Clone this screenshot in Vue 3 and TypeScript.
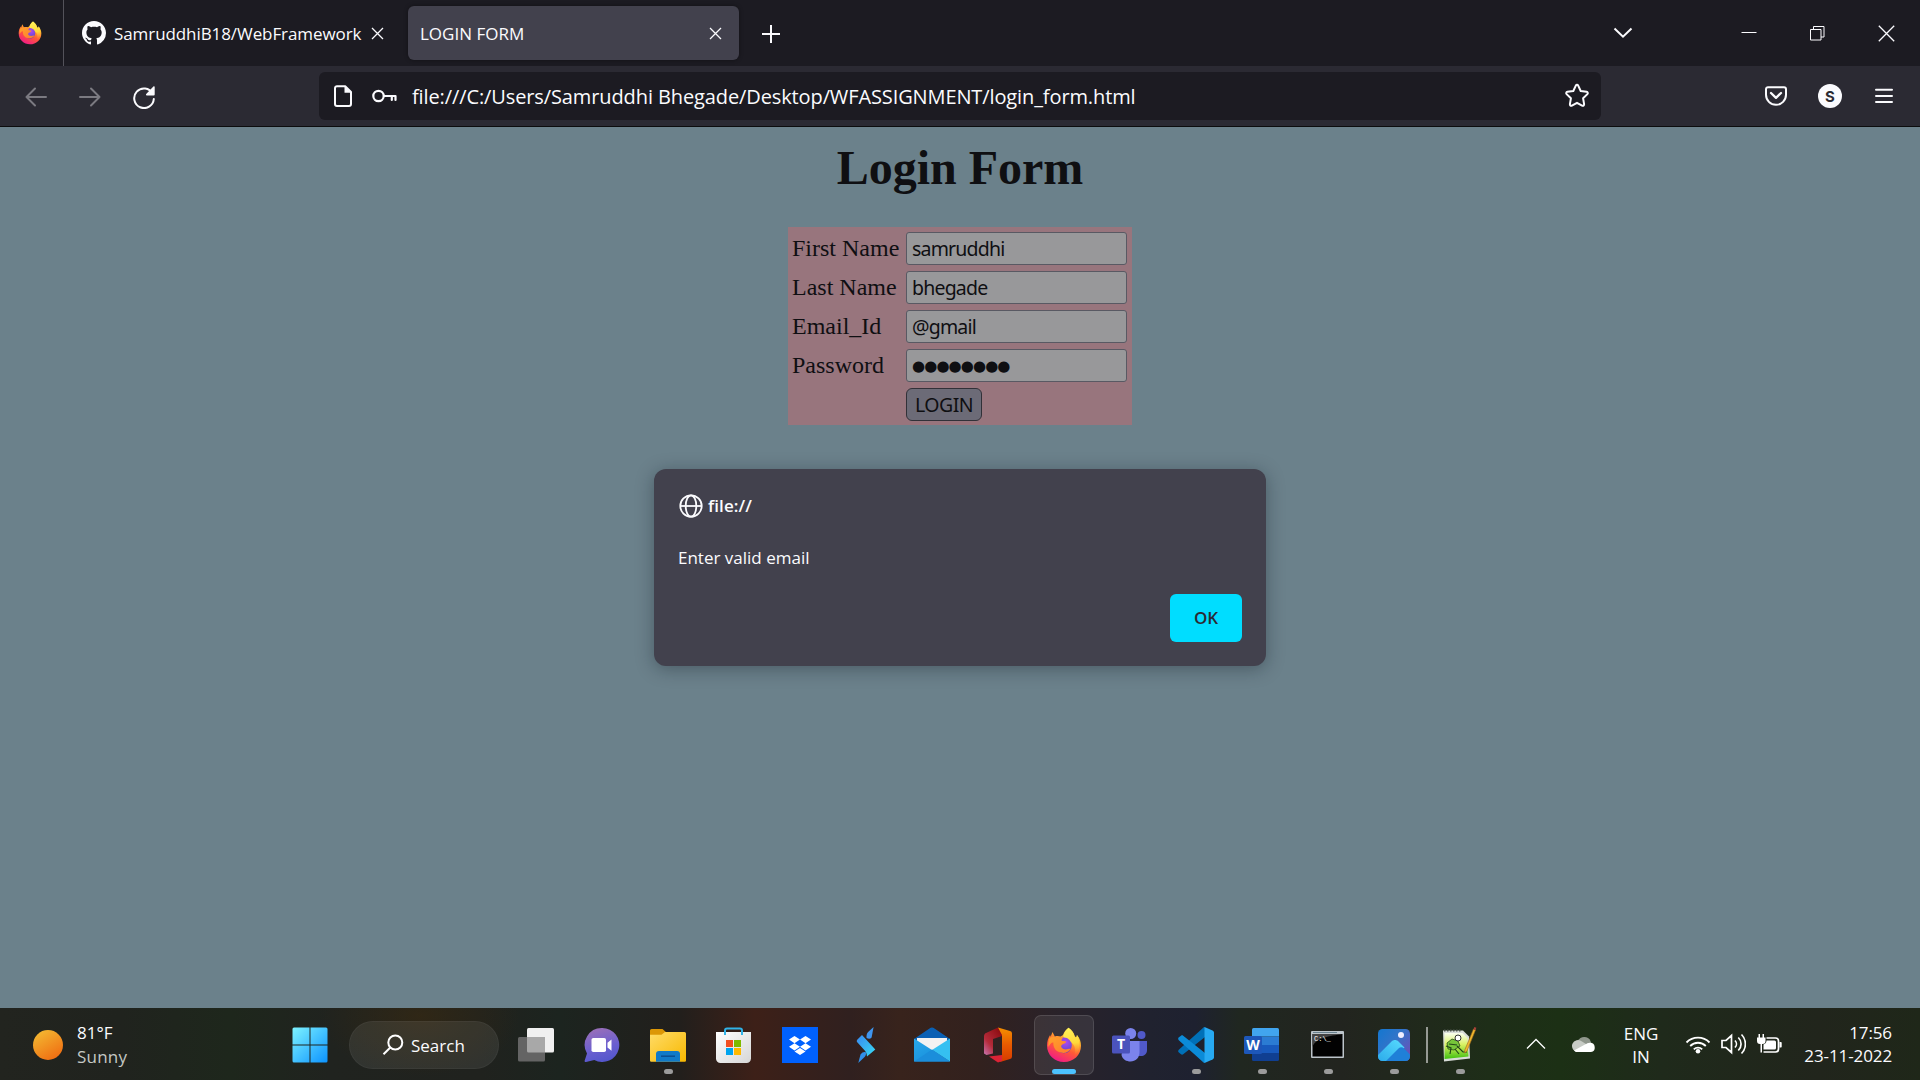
<script setup lang="ts">
interface Field {
  label: string
  value: string
  secret?: boolean
}

const fields: Field[] = [
  { label: 'First Name', value: 'samruddhi' },
  { label: 'Last Name', value: 'bhegade' },
  { label: 'Email_Id', value: '@gmail' },
  { label: 'Password', value: '●●●●●●●●', secret: true },
]

interface TaskApp {
  id: string
  running?: boolean
  active?: boolean
  divided?: boolean
}

const apps: TaskApp[] = [
  { id: 'taskview' },
  { id: 'chat' },
  { id: 'explorer', running: true },
  { id: 'store' },
  { id: 'dropbox' },
  { id: 'stream' },
  { id: 'mail' },
  { id: 'office' },
  { id: 'firefox', active: true },
  { id: 'teams' },
  { id: 'vscode', running: true },
  { id: 'word', running: true },
  { id: 'cmd', running: true },
  { id: 'photos', running: true },
  { id: 'notepad', running: true, divided: true },
]
</script>

<template>
  <div class="screen">
    <svg class="defs" width="0" height="0" aria-hidden="true">
      <defs>
        <linearGradient id="ffBody" x1="0.8" y1="0" x2="0.3" y2="1">
          <stop offset="0" stop-color="#fff44f" /><stop offset="0.3" stop-color="#ffb52e" />
          <stop offset="0.6" stop-color="#ff5a36" /><stop offset="1" stop-color="#f0188a" />
        </linearGradient>
        <linearGradient id="ffFlame" x1="0.5" y1="0" x2="0.6" y2="1">
          <stop offset="0" stop-color="#fff35a" /><stop offset="0.55" stop-color="#ffd93a" /><stop offset="1" stop-color="#ff8a30" stop-opacity="0" />
        </linearGradient>
        <radialGradient id="ffGlobe" cx="0.6" cy="0.3" r="0.8">
          <stop offset="0" stop-color="#b049ee" /><stop offset="0.6" stop-color="#7048d8" /><stop offset="1" stop-color="#4a3bb8" />
        </radialGradient>
        <linearGradient id="ffHead" x1="0" y1="0" x2="1" y2="1">
          <stop offset="0" stop-color="#ffa22b" /><stop offset="1" stop-color="#ff7b2e" />
        </linearGradient>
        <linearGradient id="winG" x1="0" y1="0" x2="1" y2="1">
          <stop offset="0" stop-color="#7df3ff" /><stop offset="1" stop-color="#0c93ff" />
        </linearGradient>
        <linearGradient id="chatG" x1="0.3" y1="0" x2="0.6" y2="1">
          <stop offset="0" stop-color="#9a6fb8" /><stop offset="0.6" stop-color="#6a5fd0" /><stop offset="1" stop-color="#5356cc" />
        </linearGradient>
        <linearGradient id="folderG" x1="0" y1="0" x2="1" y2="1">
          <stop offset="0" stop-color="#ffdc68" /><stop offset="1" stop-color="#f8b800" />
        </linearGradient>
        <linearGradient id="bagG" x1="0" y1="0" x2="1" y2="1">
          <stop offset="0" stop-color="#fff" /><stop offset="1" stop-color="#d6d6d6" />
        </linearGradient>
        <linearGradient id="streamG" x1="0" y1="0" x2="1" y2="1">
          <stop offset="0" stop-color="#3888f0" /><stop offset="1" stop-color="#38dcf4" />
        </linearGradient>
        <linearGradient id="mailG" x1="0" y1="0" x2="1" y2="1">
          <stop offset="0" stop-color="#28a8ea" /><stop offset="1" stop-color="#1488d8" />
        </linearGradient>
        <linearGradient id="offA" x1="0" y1="1" x2="0.8" y2="0">
          <stop offset="0" stop-color="#c875b0" /><stop offset="0.4" stop-color="#b42b3a" /><stop offset="1" stop-color="#8c0c10" />
        </linearGradient>
        <linearGradient id="offB" x1="0" y1="0" x2="0" y2="1">
          <stop offset="0" stop-color="#f59000" /><stop offset="0.5" stop-color="#e85a00" /><stop offset="1" stop-color="#d63a00" />
        </linearGradient>
        <linearGradient id="photoG" x1="0" y1="0" x2="1" y2="0.8">
          <stop offset="0" stop-color="#1377d0" /><stop offset="0.5" stop-color="#3474c8" /><stop offset="1" stop-color="#6b4fb8" />
        </linearGradient>
        <linearGradient id="mountG" x1="1" y1="0" x2="0" y2="1">
          <stop offset="0" stop-color="#58dcff" /><stop offset="1" stop-color="#2cabea" />
        </linearGradient>
        <linearGradient id="sunG" x1="0.2" y1="0" x2="0.8" y2="1">
          <stop offset="0" stop-color="#f3b932" /><stop offset="1" stop-color="#f06a10" />
        </linearGradient>
        <linearGradient id="grassG" x1="0" y1="0" x2="0" y2="1">
          <stop offset="0" stop-color="#fafff0" /><stop offset="0.45" stop-color="#d8f060" /><stop offset="1" stop-color="#40c010" />
        </linearGradient>
        <symbol id="fox" viewBox="0 0 36 36">
          <path fill="url(#ffBody)" d="M22.5 0.7c3.6 2.2 5.3 5 6.4 8.7l2.1 1-.1-2.3C34 11.6 35 15 35 18.7 35 28 27.5 35 18 35S1 28 1 18.5c0-4.1 1.3-7.8 3.1-10.4l.5 1.6L6.5 5l2.3 4.4c2-.6 4-.5 5.8.1l2.4-1.6c1-2.8 2.7-5 5.5-7.2z" />
          <path fill="url(#ffFlame)" d="M22.5.7C27 4.7 28.3 8 29.6 11.6L31 8c4.2 7 3.1 16.8-2.8 21 2.2-6.8.6-10.8-3-13.6-3-2.4-6.6-3-8-6.5 1-3.4 2.5-6 5.3-8.2z" />
          <circle cx="18" cy="18.4" r="7.8" fill="url(#ffGlobe)" />
          <path fill="url(#ffHead)" d="M3 12c1.7-1.900 4.900-3 7.800-1.400 2.300-.9 4.400-.9 6 .1-.4 1.200-1.500 1.800-1.200 2.800.3.8 3.300.3 4.600 1.100-.3 2-3.500 2.300-4.600 3.600-1.100 1.300.2 3.400 2.800 4.100 2.400.6 4.300-.9 6.200-.5-1.700 3.500-5.900 5-10 3.800C8 23.900 7.200 18.800 7.400 15.600 6.200 14.800 4 16.600 2.500 20c-.6-3 .1-6 .5-8z" />
        </symbol>
      </defs>
    </svg>

    <header class="tabs">
      <div class="pinned"><svg class="fox-sm" width="24" height="24"><use href="#fox" /></svg></div>
      <div class="tab">
        <svg width="24" height="24" viewBox="0 0 16 16"><path fill="#fbfbfe" fill-rule="evenodd" d="M8 0C3.58 0 0 3.58 0 8c0 3.54 2.29 6.53 5.47 7.59.4.07.55-.17.55-.38 0-.19-.01-.82-.01-1.49-2.01.37-2.53-.49-2.69-.94-.09-.23-.48-.94-.82-1.13-.28-.15-.68-.52-.01-.53.63-.01 1.08.58 1.23.82.72 1.21 1.87.87 2.33.66.07-.52.28-.87.51-1.07-1.78-.2-3.64-.89-3.64-3.95 0-.87.31-1.59.82-2.15-.08-.2-.36-1.02.08-2.12 0 0 .67-.21 2.2.82.64-.18 1.32-.27 2-.27s1.36.09 2 .27c1.53-1.04 2.2-.82 2.2-.82.44 1.1.16 1.92.08 2.12.51.56.82 1.27.82 2.15 0 3.07-1.87 3.75-3.65 3.95.29.25.54.73.54 1.48 0 1.07-.01 1.93-.01 2.2 0 .21.15.46.55.38A8.01 8.01 0 0 0 16 8c0-4.42-3.58-8-8-8z" /></svg>
        <span class="tab-title github">SamruddhiB18/WebFramework</span>
        <svg class="x" width="13" height="13" viewBox="0 0 13 13"><path d="M1 1l11 11M12 1L1 12" /></svg>
      </div>
      <div class="tab current">
        <span class="tab-title login">LOGIN FORM</span>
        <svg class="x" width="13" height="13" viewBox="0 0 13 13"><path d="M1 1l11 11M12 1L1 12" /></svg>
      </div>
      <svg class="plus" width="18" height="18" viewBox="0 0 18 18"><path d="M9 0v18M0 9h18" /></svg>
      <div class="window-controls">
        <svg width="20" height="12" viewBox="0 0 20 12"><path d="M1.500 1.500L10 9.700l8.500-8.200" stroke-width="2" /></svg>
        <svg width="16" height="16" viewBox="0 0 16 16"><path d="M0.500 7.500h15" stroke-width="1" /></svg>
        <svg width="15" height="15" viewBox="0 0 15 15"><path d="M.5 3.500h10.500v10.500H.5zM3.500 3.500V.5h10.500v10.500h-3" stroke-width="1" /></svg>
        <svg width="17" height="17" viewBox="0 0 17 17"><path d="M.8.800l15.400 15.400M16.200.8L.8 16.200" stroke-width="1.300" /></svg>
      </div>
    </header>

    <nav class="toolbar">
      <svg class="dim" width="22" height="20" viewBox="0 0 22 20"><path d="M21 10H1.500M10 1.500L1.500 10l8.500 8.500" /></svg>
      <svg class="dim" width="22" height="20" viewBox="0 0 22 20"><path d="M1 10h19.500M12 1.500l8.500 8.500-8.500 8.500" /></svg>
      <svg class="reload" width="24" height="24" viewBox="0 0 24 24"><path d="M20.600 8.500A9.800 9.800 0 1 0 21.800 14" /><path class="solid" d="M22.700 1.800v7.700a.9.900 0 0 1-.9.900h-7.100c-.7 0-1-.8-.5-1.300l7.200-7.700c.5-.5 1.300-.2 1.300.4z" /></svg>
      <div class="address">
        <svg width="20" height="24" viewBox="0 0 20 24"><path d="M4 2.200h8.200l5.800 5.800v11.900a2 2 0 0 1-2 2H4a2 2 0 0 1-2-2V4.200a2 2 0 0 1 2-2z" /><path class="solid" d="M11.500 2v6.800h6.800z" /></svg>
        <svg class="key" width="25" height="14" viewBox="0 0 25 14"><circle cx="6.500" cy="7" r="5.200" /><path d="M12 7h11.500v4M19.800 7v4" /></svg>
        <span class="url">file:///C:/Users/Samruddhi Bhegade/Desktop/WFASSIGNMENT/login_form.html</span>
        <svg class="star" width="26" height="26" viewBox="0 0 26 26"><path d="M11.800 2.600c.5-1 1.900-1 2.400 0l2.500 5.400 5.900.8c1.200.2 1.600 1.500.8 2.300l-4.300 4.200 1 5.900c.2 1.200-1 2-2 1.400L13 19.800l-5.100 2.800c-1 .6-2.200-.2-2-1.400l1-5.900-4.300-4.200c-.8-.8-.4-2.100.8-2.300l5.900-.8z" /></svg>
      </div>
      <svg class="pocket" width="22" height="20" viewBox="0 0 22 20"><path d="M3 1.200h16a2 2 0 0 1 2 2v5.600a10 10 0 0 1-20 0V3.200a2 2 0 0 1 2-2z" /><path d="M6 7l5 4.800L16 7" stroke-width="2.300" /></svg>
      <span class="account">S</span>
      <svg class="menu" width="18" height="16" viewBox="0 0 18 16"><path d="M1 1.700h16M1 7.900h16M1 14.100h16" /></svg>
    </nav>

    <main class="page">
      <h1>Login Form</h1>
      <form class="form" @submit.prevent>
        <label v-for="f in fields" :key="f.label" class="row">
          <span class="name">{{ f.label }}</span>
          <span class="field" :class="{ secret: f.secret }">{{ f.value }}</span>
        </label>
        <div class="row"><span class="name"></span><button type="button" class="login-btn">LOGIN</button></div>
      </form>

      <section class="dialog">
        <div class="origin">
          <svg width="24" height="24" viewBox="0 0 24 24"><circle cx="12" cy="12" r="10.700" /><ellipse cx="12" cy="12" rx="5.300" ry="10.700" /><path d="M1.500 12h21" /></svg>
          <b>file://</b>
        </div>
        <p>Enter valid email</p>
        <button type="button" class="ok"><span>OK</span></button>
      </section>
    </main>

    <footer class="taskbar">
      <div class="weather">
        <svg width="30" height="30" viewBox="0 0 30 30"><circle cx="15" cy="15" r="15" fill="url(#sunG)" /></svg>
        <div><span class="temp">81°F</span><span class="sky">Sunny</span></div>
      </div>
      <div class="slot">
        <svg width="36" height="36" viewBox="0 0 36 36"><path fill="url(#winG)" d="M2 .5h15.500v17H.500V2A1.500 1.500 0 0 1 2 .5zM18.500.5H34A1.500 1.500 0 0 1 35.500 2v15.500h-17zM.5 18.500h17v17H2A1.500 1.500 0 0 1 .5 34zM18.500 18.500h17V34a1.500 1.500 0 0 1-1.500 1.500H18.500z" /></svg>
      </div>
      <div class="search">
        <svg width="22" height="22" viewBox="0 0 22 22"><circle cx="13.300" cy="8.500" r="7" /><path d="M8.300 13.500L1.500 20.300" /></svg>
        <span>Search</span>
      </div>
      <div v-for="app in apps" :key="app.id" class="slot" :class="{ active: app.active, divided: app.divided }">
        <svg v-if="app.id === 'taskview'" width="36" height="36" viewBox="0 0 36 36">
          <rect x="9" y="1" width="27" height="24.500" rx="1.500" fill="#f0f0f0" />
          <rect x="0" y="10" width="27" height="24.500" rx="1.500" fill="#646464" />
          <path d="M9 10h18v15.500H10.500A1.500 1.500 0 0 1 9 24z" fill="#a8a8a8" />
        </svg>
        <svg v-else-if="app.id === 'chat'" width="36" height="36" viewBox="0 0 36 36">
          <path fill="url(#chatG)" d="M18.300 1a17 17 0 1 1-8 32L2 35c-1 .2-1.700-.6-1.300-1.500L3 26.500A17 17 0 0 1 18.300 1z" />
          <rect x="7.500" y="11" width="14.500" height="14" rx="1.800" fill="#fff" /><path fill="#fff" d="M23.500 15.800l4-3.200v11.200l-4-3.200z" />
        </svg>
        <svg v-else-if="app.id === 'explorer'" width="36" height="36" viewBox="0 0 36 36">
          <path fill="#dc9706" d="M1.500 2h11l4.500 4v7H0V3.500A1.500 1.500 0 0 1 1.500 2z" />
          <path fill="url(#folderG)" d="M0 7.800h11.500L15 5h19.500A1.500 1.500 0 0 1 36 6.500v27a1.200 1.200 0 0 1-1.200 1.200H1.200A1.200 1.200 0 0 1 0 33.500z" />
          <path fill="#107ac8" d="M9 24h18a3 3 0 0 1 3 3v7.700H6V27a3 3 0 0 1 3-3z" /><path stroke="#0b4e91" stroke-width="1.500" d="M11 29.200h14" />
        </svg>
        <svg v-else-if="app.id === 'store'" width="36" height="36" viewBox="0 0 36 36">
          <path fill="url(#bagG)" d="M0 5h35v26.500a4.500 4.500 0 0 1-4.500 4.500h-26A4.500 4.500 0 0 1 0 31.500z" />
          <path fill="none" stroke="#30b3e8" stroke-width="2" d="M9 8V3.500a2 2 0 0 1 2-2h13a2 2 0 0 1 2 2V8" />
          <path fill="#f25022" d="M10 13h7v7h-7z" /><path fill="#7fba00" d="M18 13h7v7h-7z" />
          <path fill="#00a4ef" d="M10 21h7v7h-7z" /><path fill="#ffb900" d="M18 21h7v7h-7z" />
        </svg>
        <svg v-else-if="app.id === 'dropbox'" width="36" height="36" viewBox="0 0 36 36">
          <path fill="#0061fe" d="M0 0h36v36H0z" /><path fill="#fff" d="M12.500 9l5.500 3.600-5.500 3.600L7 12.600zM23.500 9l5.500 3.600-5.500 3.600-5.500-3.600zM12.500 16.200l5.500 3.600-5.500 3.600L7 19.800zM23.500 16.200l5.500 3.600-5.500 3.600-5.500-3.600zM18 21l5.500 3.500L18 28l-5.500-3.500z" />
        </svg>
        <svg v-else-if="app.id === 'stream'" width="36" height="36" viewBox="0 0 36 36">
          <path fill="#3f95ee" d="M25.600 0l-2 10.500c-1.300 1.500-3 1.500-5 .5-.3-2 0-4.500 1.500-6z" />
          <path fill="url(#streamG)" d="M9.200 12.700L14 8l13.300 14.500-8.300 7c-.2-3-1-4.800-2.500-6.200L9.500 15.500c-.8-.8-1-2-.3-2.800z" />
          <path fill="#3190ea" d="M12.500 27.500c1.500-2 3.300-2.800 5.300-2.300.5 1.600 0 3.300-1 4.600L10.300 36z" />
        </svg>
        <svg v-else-if="app.id === 'mail'" width="36" height="36" viewBox="0 0 36 36">
          <path fill="#0a60b4" d="M0 12L15.500 1.500a4 4 0 0 1 5 0L36 12v4H0z" /><path fill="#f2f2f2" d="M3 11h30v12H3z" />
          <path fill="url(#mailG)" d="M0 11.500L36 34.500H0z" /><path fill="#35c0f1" d="M36 11.500L18 23l18 11.500z" /><path fill="#1b8edb" d="M18 22.500L36 34.500H0z" />
        </svg>
        <svg v-else-if="app.id === 'office'" width="36" height="36" viewBox="0 0 36 36">
          <path fill="url(#offA)" d="M18 .5L22 4v5l-9 3v14.500L6.500 28 4 26.500V9.500C4 8 4.500 6.500 6 6z" />
          <path fill="url(#offB)" d="M18 .5L30 4a2.500 2.500 0 0 1 2 2.500v23a2.500 2.500 0 0 1-2 2.500l-10 3 2-6V8z" />
          <path fill="#dc2336" d="M9 29.500l13-1.500v6l-4 1.500z" />
        </svg>
        <svg v-else-if="app.id === 'firefox'" width="36" height="36"><use href="#fox" /></svg>
        <svg v-else-if="app.id === 'teams'" width="36" height="36" viewBox="0 0 36 36">
          <circle cx="29.500" cy="8" r="4" fill="#5059c9" /><path fill="#5059c9" d="M25 14h10v9c0 4-3 6-6 6h-4z" />
          <circle cx="18.700" cy="6.500" r="5.500" fill="#7b83eb" /><path fill="#7b83eb" d="M12 14h15.500v11c0 6-4 9.500-9 9.500-4 0-8-2-9-6.500z" />
          <rect y="8.500" width="18" height="18" rx="1.500" fill="#4b53bc" /><text x="9" y="22" class="glyph">T</text>
        </svg>
        <svg v-else-if="app.id === 'vscode'" width="36" height="36" viewBox="0 0 36 36">
          <path fill="#0070b8" d="M.6 25.300l2.400 2c.7.600 1.500.6 2.200 0L27 10V1c0-.9-.8-1.200-1.500-.6L.8 22.800c-.8.7-.8 1.800-.2 2.500z" />
          <path fill="#0b8bd8" d="M.6 10.600L3 8.700c.7-.6 1.500-.6 2.200 0L27 26v9c0 .9-.8 1.200-1.500.6L.8 13.200c-.8-.7-.8-1.900-.2-2.600z" />
          <path fill="#27a9f2" d="M26.500 0l8 3.500c1 .5 1.500 1.200 1.500 2.200v24.600c0 1-.5 1.700-1.500 2.200l-8 3.500z" />
        </svg>
        <svg v-else-if="app.id === 'word'" width="36" height="36" viewBox="0 0 36 36">
          <path fill="#41a5ee" d="M9.500 1h24A1.500 1.500 0 0 1 35 2.500v7H8v-7A1.500 1.500 0 0 1 9.500 1z" /><path fill="#2b7cd3" d="M8 9.500h27V18H8z" /><path fill="#185abd" d="M8 18h27v8H8z" /><path fill="#103f91" d="M8 26h27v6.500a1.500 1.500 0 0 1-1.500 1.500h-24A1.500 1.500 0 0 1 8 32.500z" />
          <rect y="9" width="18" height="18" rx="1.500" fill="#1d57b9" /><text x="9" y="22.500" class="glyph">W</text>
        </svg>
        <svg v-else-if="app.id === 'cmd'" width="36" height="36" viewBox="0 0 36 36">
          <rect x="1" y="4" width="33" height="27" rx="1" fill="#bcc4ca" /><path fill="#020202" d="M2.500 7h30v22.500h-30z" /><path fill="#434343" d="M2.500 7h30C20 9 5 11 2.500 20z" />
          <path fill="#68808d" d="M3 5h24v1H3z" /><text x="4" y="14" class="prompt">C:\_</text>
        </svg>
        <svg v-else-if="app.id === 'photos'" width="36" height="36" viewBox="0 0 36 36">
          <rect x="2" y="2" width="32" height="32" rx="4.500" fill="url(#photoG)" />
          <path fill="url(#mountG)" d="M2 29.500V28l13.500-13.500c2-2 5-2 7 0l6 6L16 34H6.500A4.500 4.500 0 0 1 2 29.500z" />
          <path fill="#1f80d8" d="M10 34l12.500-12.500c1.600-1.600 4-1.600 5.600 0L34 27.500v2a4.500 4.500 0 0 1-4.500 4.500z" />
          <circle cx="25" cy="8" r="3" fill="#f0eeff" />
        </svg>
        <svg v-else width="36" height="36" viewBox="0 0 36 36">
          <path fill="#d8dcd8" d="M1 3.500h20l6 6 1 22-26 3z" /><path fill="url(#grassG)" d="M2.500 6h18l5 5 1 18.500-24 2.500z" />
          <path stroke="#4b534b" stroke-width="2" stroke-dasharray="1.500 1.500" d="M2 3.500h18" />
          <path fill="#77c63a" stroke="#294d18" stroke-width=".8" d="M5 16l5-4 6 2 2 5-6 4-6-1z" /><circle cx="16" cy="11" r="3" fill="#fff" stroke="#333" /><path fill="none" stroke="#224718" stroke-width="1.200" d="M4 19l5 2-1 6m5-5l4 5m-2-8l6 6h4M7 17l8 1" />
          <path fill="#efb82c" stroke="#9b661f" stroke-width=".6" d="M31.500 2l2 1-8.500 21-2.500 2 .5-3.500z" /><path fill="#a84139" d="M32.300 0l2 .8-.8 2.700-2-1z" />
        </svg>
        <i v-if="app.running || app.active" class="mark"></i>
      </div>
      <div class="tray">
        <svg class="caret" width="20" height="12" viewBox="0 0 20 12"><path d="M1 10.500l9-9 9 9" /></svg>
        <svg class="cloud" width="26" height="18" viewBox="0 0 26 18"><path fill="#8f968c" d="M7 6a6.800 6.800 0 0 1 12.500 0l2 5H7z" /><path fill="#c7cbc5" d="M7 17A6 6 0 1 1 11 6.500L20 12l-8 5z" /><path fill="#fff" d="M3 15.500l11-6c1.600-.8 3-1.800 5-1.800a4.700 4.700 0 0 1 1 9.300H6c-1.300 0-2.300-.6-3-1.500z" /></svg>
        <div class="lang"><span>ENG</span><span>IN</span></div>
        <svg class="wifi" width="26" height="20" viewBox="0 0 26 20"><path d="M1.500 8.500a16.200 16.200 0 0 1 23 0M5.200 12a11 11 0 0 1 15.600 0M8.800 15.300a6 6 0 0 1 8.400 0" /><circle cx="13" cy="17.200" r="2.300" /></svg>
        <svg class="vol" width="26" height="22" viewBox="0 0 26 22"><path d="M2 7.500h4l5.500-5v17l-5.500-5H2zM15 7.500a5 5 0 0 1 0 7M18.300 4.500a9 9 0 0 1 0 13M21.500 1.500a13.500 13.500 0 0 1 0 19" /></svg>
        <svg class="bat" width="26" height="22" viewBox="0 0 26 22"><path d="M10.500 5h9a3 3 0 0 1 3 3v8a3 3 0 0 1-3 3H7.500" /><path class="fill" d="M10.500 7.500h8a1.500 1.500 0 0 1 1.500 1.500v6a1.500 1.500 0 0 1-1.500 1.500h-11v-5c2-1 3-2 3-4zM23.500 9h1.200c.7 0 1 .6 1 1v3.500c0 .6-.3 1-1 1h-1.200zM1 4.500h8.500V8a3 3 0 0 1-3 3H6v8.500H4.500V11H4a3 3 0 0 1-3-3zM2.500 1H4v4H2.500zM6.500 1H8v4H6.500z" /></svg>
        <div class="clock"><span class="time">17:56</span><span class="date">23-11-2022</span></div>
      </div>
    </footer>
  </div>
</template>

<style>
body {
  margin: 0;
  overflow: hidden;
}
</style>

<style scoped>
.screen {
  width: 1920px;
  height: 1080px;
  display: flex;
  flex-direction: column;
  overflow: hidden;
  color: #fbfbfe;
  font-family: "Open Sans", "Noto Sans", sans-serif;
  font-size: 17px;
}
.screen * { box-sizing: border-box; }
.defs { position: absolute; }
svg { flex: none; display: block; }
span, b, p { white-space: nowrap; }

.tabs {
  height: 66px;
  flex: none;
  display: flex;
  align-items: center;
  background: #1c1b22;
}
.pinned {
  width: 64px;
  height: 66px;
  padding: 21px 0 0 18px;
  border-right: 1px solid #53525a;
}
.tab {
  display: flex;
  align-items: center;
  width: 326px;
  height: 54px;
  padding-left: 18px;
}
.tab-title { line-height: 24px; padding-top: 1px; }
.github { width: 265px; padding-left: 8px; letter-spacing: -0.08px; }
.x { fill: none; stroke: #fbfbfe; stroke-width: 1.3; }
.tab:not(.current) { width: 326px; }
.tab:not(.current) .x { margin-left: 0; }
.current {
  width: 331px;
  margin-left: 18px;
  padding: 0 17px 0 12px;
  justify-content: space-between;
  background: #42414d;
  border-radius: 6px;
  box-shadow: 0 0 4px rgba(0, 0, 0, 0.4);
}
.plus { margin-left: 23px; margin-top: 2px; stroke: #fbfbfe; stroke-width: 2; }
.window-controls {
  display: flex;
  align-items: center;
  margin-left: auto;
  padding-right: 25px;
  fill: none;
  stroke: #fbfbfe;
}
.window-controls svg:nth-child(2) { margin-left: 108px; }
.window-controls svg:nth-child(3) { margin-left: 53px; }
.window-controls svg:nth-child(4) { margin-left: 53px; }

.toolbar {
  height: 61px;
  flex: none;
  display: flex;
  align-items: center;
  padding: 0 27px 0 25px;
  background: #2b2a33;
  border-bottom: 1px solid #0c0c0d;
  fill: none;
  stroke: #fbfbfe;
  stroke-width: 2;
  stroke-linecap: round;
  stroke-linejoin: round;
}
.dim { stroke: #7b7a81; margin-right: 32px; margin-top: 2px; }
.solid { fill: #fbfbfe; stroke: none; }
.reload { margin: 2px 1px 0 -1px; }
.address {
  display: flex;
  align-items: center;
  width: 1282px;
  height: 48px;
  margin-left: 162px;
  padding: 0 11px 0 14px;
  background: #1c1b22;
  border-radius: 6px;
}
.key { margin-left: 19px; stroke-width: 2.2; }
.url {
  margin-left: 15px;
  padding-top: 2px;
  font-size: 20px;
  line-height: 30px;
  letter-spacing: -0.11px;
}
.star { margin-left: auto; }
.pocket { margin-left: 164px; }
.account {
  width: 24px;
  height: 24px;
  margin: -1px 33px 0 31px;
  border-radius: 50%;
  background: #fbfbfe;
  color: #2b2a33;
  font: bold 15px/25px Inter, sans-serif;
  text-align: center;
}

.page {
  position: relative;
  flex: 1;
  display: flex;
  flex-direction: column;
  align-items: center;
  background: #6b818b;
  color: #0f0f12;
}
h1 {
  margin: 14px 0 33px;
  font: bold 48px/53px "Liberation Serif", serif;
}
.form {
  display: flex;
  flex-direction: column;
  gap: 6px;
  width: 344px;
  height: 198px;
  padding: 5px 5px 4px 4px;
  background: #98757d;
}
.row { display: flex; height: 33px; flex: none; }
.name {
  width: 114px;
  font: 24px/33px "Liberation Serif", serif;
}
.field {
  width: 221px;
  height: 33px;
  padding-left: 5px;
  border: 1px solid #595963;
  border-radius: 3px;
  background: #98989a;
  font: 19.5px/31px "Noto Sans", sans-serif;
  letter-spacing: -0.8px;
}
.secret { font: 15px/33px "DejaVu Sans", sans-serif; letter-spacing: -0.9px; }
.login-btn {
  width: 76px;
  height: 33px;
  padding: 0;
  border: 1px solid #313138;
  border-radius: 6px;
  background: #6c6b77;
  color: #0f0f12;
  font: 19.5px/31px "Noto Sans", sans-serif;
  letter-spacing: -0.5px;
}
.dialog {
  position: absolute;
  left: 654px;
  top: 342px;
  width: 612px;
  height: 197px;
  display: flex;
  flex-direction: column;
  padding: 24px;
  border-radius: 12px;
  background: #42414d;
  color: #fbfbfe;
  box-shadow: 0 3px 18px rgba(12, 20, 28, 0.35);
}
.origin { display: flex; align-items: center; height: 26px; gap: 5px; padding-left: 1px; }
.origin svg { fill: none; stroke: #fbfbfe; stroke-width: 1.8; }
.origin b { font-weight: 600; line-height: 24px; letter-spacing: 0.1px; }
.dialog p { margin: 26px 0 1px; line-height: 26px; }
.ok {
  width: 72px;
  height: 48px;
  margin-top: 22px;
  align-self: flex-end;
  border: 0;
  padding: 0;
  border-radius: 6px;
  background: #00ddff;
  color: #2b2a33;
  font: 600 17px/48px "Open Sans", sans-serif;
}

.taskbar {
  height: 72px;
  flex: none;
  display: flex;
  align-items: center;
  background:
    radial-gradient(ellipse 100px 60px at 420px 8px, rgba(58, 42, 16, 0.6), transparent),
    linear-gradient(90deg, #22241f 0, #20231e 120px, #1e271c 230px, #20231f 330px, #20221e 480px, #1c241f 560px, #221f1c 680px, #3d2018 755px, #30201f 850px, #38231c 900px, #32211e 980px, #29222a 1060px, #20222f 1150px, #1e2130 1195px, #202720 1240px, #22241f 1340px, #202a1b 1430px, #1e2e18 1490px, #1c3015 1560px, #1f2a1b 1660px, #21251c 1820px, #1f2719 1920px);
}
.weather { display: flex; align-items: center; width: 277px; padding: 2px 0 0 33px; gap: 14px; }
.weather div { display: flex; flex-direction: column; }
.weather span { line-height: 24px; }
.sky { color: #c5c8c4; letter-spacing: 0.2px; }
.slot {
  position: relative;
  width: 66px;
  height: 72px;
  display: flex;
  align-items: center;
  justify-content: center;
  flex: none;
}
.slot > svg { position: relative; margin-top: 2px; }
.mark {
  position: absolute;
  left: 29px;
  top: 61px;
  width: 9px;
  height: 5px;
  border-radius: 3px;
  background: #9b9b9b;
}
.active::before {
  content: "";
  position: absolute;
  inset: 7px 3px 5px;
  border: 1px solid rgba(255, 255, 255, 0.12);
  border-radius: 7px;
  background: rgba(255, 255, 255, 0.08);
}
.active .mark { left: 21px; width: 24px; background: #4cc2ff; }
.divided::before {
  content: "";
  position: absolute;
  left: -1px;
  top: 19px;
  width: 2px;
  height: 36px;
  background: #969a94;
}
.glyph { fill: #fff; font: bold 14px "Open Sans", sans-serif; text-anchor: middle; }
.prompt { fill: #fff; font: 7px "Liberation Mono", monospace; }
.search {
  display: flex;
  align-items: center;
  width: 150px;
  height: 48px;
  margin: 2px 4px 0 6px;
  padding-left: 32px;
  gap: 7px;
  border-radius: 24px;
  border: 1px solid rgba(255, 255, 255, 0.04);
  background: rgba(255, 255, 255, 0.08);
}
.search svg { fill: none; stroke: #fff; stroke-width: 2; }
.search span { line-height: 24px; padding-top: 2px; }
.tray { display: flex; align-items: center; height: 72px; flex: 1; padding-right: 28px; }
.caret { margin-left: 33px; fill: none; stroke: #fff; stroke-width: 1.3; }
.cloud { margin-left: 25px; }
.lang { display: flex; flex-direction: column; align-items: center; width: 50px; margin-left: 19px; padding-top: 1px; line-height: 23px; }
.wifi { margin-left: 19px; fill: none; stroke: #fff; stroke-width: 1.8; }
.wifi circle { fill: #fff; stroke: none; }
.vol { margin-left: 9px; fill: none; stroke: #fff; stroke-width: 1.7; }
.bat { margin-left: 10px; fill: none; stroke: #fff; stroke-width: 1.7; }
.bat .fill { fill: #fff; stroke: none; }
.clock { display: flex; flex-direction: column; align-items: flex-end; margin-left: auto; line-height: 23px; letter-spacing: -0.1px; }
</style>
